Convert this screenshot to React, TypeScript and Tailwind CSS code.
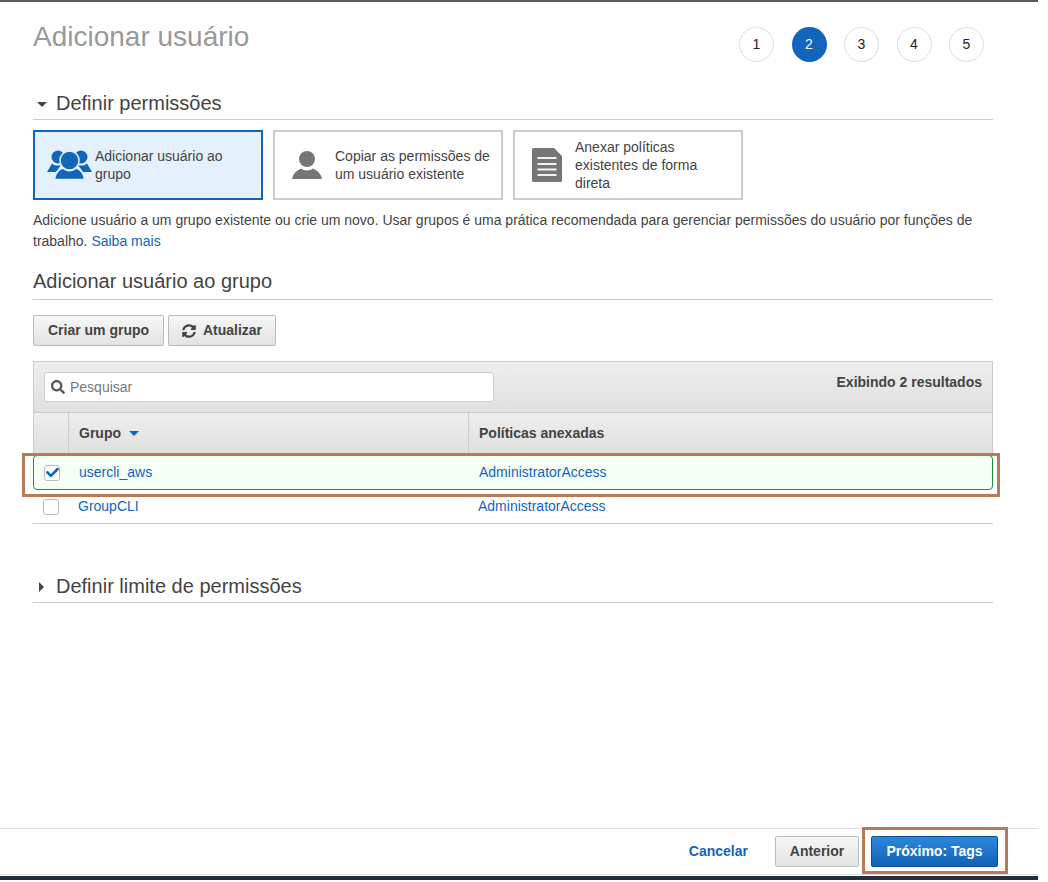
import React from "react";
import { FaCheck, FaSearch, FaSyncAlt } from "react-icons/fa";

const steps = [1, 2, 3, 4, 5];

function GroupIcon() {
  return (
    <svg width="45" height="30" viewBox="0 0 45 30" fill="#1166bb">
      <circle cx="11" cy="7" r="6.5" />
      <circle cx="34" cy="7" r="6.5" />
      <path d="M0 22 L5 13.5 C8 16 11 16 14 15 L9 22 Z" />
      <path d="M45 22 L40 13.5 C37 16 34 16 31 15 L36 22 Z" />
      <circle cx="22.5" cy="10.5" r="9.5" stroke="#e4f1fc" strokeWidth="1.5" />
      <path d="M7.5 29.5 C8 24 11 20 15.5 18 C19.5 21.5 25.5 21.5 29.5 18 C34 20 37 24 37.5 29.5 Z" stroke="#e4f1fc" strokeWidth="1.5" />
    </svg>
  );
}

function UserIcon() {
  return (
    <svg width="30" height="28" viewBox="0 0 30 28" fill="#767676">
      <circle cx="15" cy="8" r="8" />
      <path d="M0 28 C1 23 4 20 9 17.5 C12 20 18 20 21 17.5 C26 20 29 23 30 28 Z" />
    </svg>
  );
}

function DocIcon() {
  return (
    <svg width="30" height="34" viewBox="0 0 30 34">
      <path d="M1.5 0 H22 L30 8 V32.5 Q30 34 28.5 34 H1.5 Q0 34 0 32.5 V1.5 Q0 0 1.5 0 Z" fill="#767676" />
      <path d="M5.5 10 H24.5 M5.5 16 H24.5 M5.5 21.5 H24.5 M5.5 27 H24.5" stroke="#f2f2f2" strokeWidth="2" />
    </svg>
  );
}

function Card({ icon, active, children }: { icon: React.ReactNode; active?: boolean; children: React.ReactNode }) {
  return (
    <div
      className={`w-[230px] h-[70px] flex items-center border-2 text-[14px] leading-[18px] text-[#444] ${
        active ? "border-[#1166bb] bg-[#e4f1fc]" : "border-[#ccc] bg-white"
      }`}
    >
      {icon}
      <span>{children}</span>
    </div>
  );
}

function SectionTitle({ caret, children }: { caret: "down" | "right"; children: React.ReactNode }) {
  return (
    <div className="h-[33px] flex items-center border-b border-[#ccc] text-[20px] text-[#444]">
      <span className="w-[23px] pl-[4px] flex items-center">
        {caret === "down" ? (
          <span className="mt-[3px] w-0 h-0 border-x-[5px] border-x-transparent border-t-[5px] border-t-[#444]" />
        ) : (
          <span className="mt-[1px] ml-[2px] w-0 h-0 border-y-[5px] border-y-transparent border-l-[5px] border-l-[#444]" />
        )}
      </span>
      {children}
    </div>
  );
}

const grayBtn =
  "h-[31px] flex items-center justify-center rounded-[2px] border border-[#bbb] bg-gradient-to-b from-[#f7f7f7] to-[#e3e3e3] text-[14px] font-bold text-[#444]";

export default function App() {
  return (
    <div className="relative w-[1038px] h-[880px] flex flex-col bg-white font-['Liberation_Sans',Arial,sans-serif] text-[#444]">
      <div className="h-[2px] bg-[#545b64]" />
      <main className="flex-1 pl-[33px] pr-[45px]">
        <header className="h-[85px] flex justify-between">
          <h1 className="pt-[16px] text-[28px] leading-[38px] text-[#999]">Adicionar usuário</h1>
          <div className="pt-[25px] pr-[9px] flex gap-[17.5px]">
            {steps.map((n) => (
              <div
                key={n}
                className={`w-[35px] h-[35px] rounded-full flex items-center justify-center text-[14px] ${
                  n === 2 ? "bg-[#1166bb] text-white" : "border border-[#ddd] text-[#222]"
                }`}
              >
                {n}
              </div>
            ))}
          </div>
        </header>

        <SectionTitle caret="down">Definir permissões</SectionTitle>

        <div className="mt-[10px] flex gap-[10px]">
          <Card active icon={<span className="ml-[12px] mr-[3px] flex"><GroupIcon /></span>}>
            Adicionar usuário ao
            <br />
            grupo
          </Card>
          <Card icon={<span className="ml-[17px] mr-[13px] flex"><UserIcon /></span>}>
            Copiar as permissões de
            <br />
            um usuário existente
          </Card>
          <Card icon={<span className="ml-[17px] mr-[13px] flex"><DocIcon /></span>}>
            Anexar políticas
            <br />
            existentes de forma
            <br />
            direta
          </Card>
        </div>

        <p className="mt-[10px] text-[14px] leading-[21px]">
          Adicione usuário a um grupo existente ou crie um novo. Usar grupos é uma prática recomendada para gerenciar permissões do usuário por funções de
          <br />
          trabalho. <span className="text-[#1166bb]">Saiba mais</span>
        </p>

        <h2 className="mt-[16px] h-[32px] border-b border-[#ccc] text-[20px] leading-[27px]">Adicionar usuário ao grupo</h2>

        <div className="mt-[15px] flex gap-[4px]">
          <button className={`${grayBtn} w-[131px]`}>Criar um grupo</button>
          <button className={`${grayBtn} w-[108px] gap-[7px]`}>
            <FaSyncAlt size={14} />
            Atualizar
          </button>
        </div>

        <section className="mt-[15px] relative">
          <div className="h-[52px] flex items-start justify-between border border-[#ccc] bg-gradient-to-b from-[#eeeeee] to-[#e0e0e0] pl-[10px] pr-[10px]">
            <div className="mt-[10px] w-[450px] h-[30px] flex items-center gap-[5px] rounded-[3px] border border-[#ccc] bg-white pl-[6px] text-[14px] text-[#777]">
              <FaSearch size={14} color="#555" />
              Pesquisar
            </div>
            <span className="mt-[10px] text-[14px] font-bold">Exibindo 2 resultados</span>
          </div>

          <div className="h-[41px] flex border-x border-[#ccc] bg-gradient-to-b from-[#eeeeee] to-[#e0e0e0] text-[14px] font-bold">
            <div className="w-[35px] border-r border-[#ccc]" />
            <div className="w-[400px] flex items-center gap-[8px] border-r border-[#ccc] pl-[10px]">
              Grupo
              <span className="w-0 h-0 border-x-[5px] border-x-transparent border-t-[5px] border-t-[#1166bb]" />
            </div>
            <div className="flex-1 flex items-center pl-[10px]">Políticas anexadas</div>
          </div>

          <div className="mt-[1px] h-[35px] flex items-center rounded-[4px] border border-[#16913c] bg-[#f6fff6] text-[14px] text-[#1166bb]">
            <div className="w-[34px] pl-[10px]">
              <span className="w-[16px] h-[16px] flex items-center justify-center rounded-[3px] border border-[#bbb] bg-white">
                <FaCheck size={13} color="#1166bb" />
              </span>
            </div>
            <div className="w-[400px] pl-[11px]">usercli_aws</div>
            <div className="pl-[11px]">AdministratorAccess</div>
          </div>

          <div className="h-[34px] flex items-center border-b border-[#ccc] text-[14px] text-[#1166bb]">
            <div className="w-[35px] pl-[10px]">
              <span className="block w-[16px] h-[16px] rounded-[3px] border border-[#bbb] bg-white" />
            </div>
            <div className="w-[400px] pl-[10px]">GroupCLI</div>
            <div className="pl-[10px]">AdministratorAccess</div>
          </div>

          <div className="absolute left-[-11px] top-[92px] w-[978px] h-[44px] border-[3px] border-[#b97a57]" />
        </section>

        <div className="mt-[46px]">
          <SectionTitle caret="right">Definir limite de permissões</SectionTitle>
        </div>
      </main>

      <footer className="relative h-[47px] flex items-center justify-end border-y border-[#ddd] pr-[40px]">
        <span className="mr-[27px] text-[14px] font-bold text-[#1166bb]">Cancelar</span>
        <button className={`${grayBtn} w-[84px] mr-[12px]`}>Anterior</button>
        <button className="h-[31px] w-[127px] rounded-[2px] border border-[#0f4f8f] bg-gradient-to-b from-[#2b88de] to-[#0f63b5] text-[14px] font-bold text-white">
          Próximo: Tags
        </button>
        <div className="absolute right-[30px] top-[-2px] w-[146px] h-[47px] border-[3px] border-[#b97a57]" />
      </footer>
      <div className="mt-[1px] h-[4px] bg-[#232f3e]" />
    </div>
  );
}
